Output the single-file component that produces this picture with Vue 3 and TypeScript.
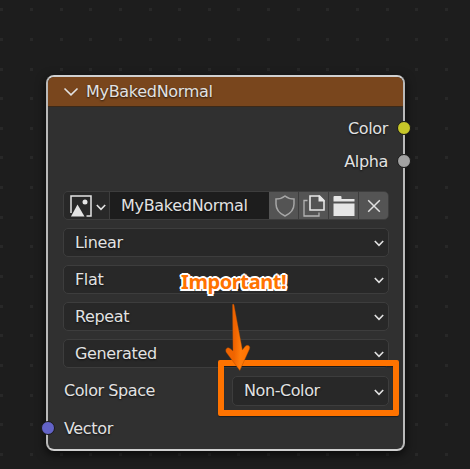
<script setup lang="ts">
interface Point {
  x: number
  y: number
}

const STEP = 29.64
const dots: Point[] = []
for (let row = 0; row < 16; row++) {
  for (let col = 0; col < 16; col++) {
    dots.push({
      x: Math.floor(0.8 + col * STEP),
      y: 8 + Math.floor(0.76 + row * STEP),
    })
  }
}

const options: string[] = ['Linear', 'Flat', 'Repeat', 'Generated']
</script>

<template>
  <main class="editor">
    <svg class="grid" width="470" height="469" shape-rendering="crispEdges">
      <rect v-for="(d, i) in dots" :key="i" :x="d.x" :y="d.y" width="3" height="3" fill="#282828" />
    </svg>

    <section class="node">
      <header class="head">
        <svg class="fold" width="16" height="10" viewBox="0 0 16 10">
          <path d="M1.5 1.5 8 7.8 14.500 1.500" />
        </svg>
        <span class="title">MyBakedNormal</span>
      </header>

      <div class="out"><span>Color</span><i class="socket yellow"></i></div>
      <div class="out"><span>Alpha</span><i class="socket grey"></i></div>

      <div class="body">
        <div class="picker">
          <button class="browse">
            <svg width="22" height="22" viewBox="0 0 22 22">
              <path d="M1 18V1H21V21H16.500" fill="none" stroke="#e4e4e4" stroke-width="1.500" />
              <path d="M1 21.500 7.500 9.500 14.500 21.500Z" fill="#e4e4e4" />
              <circle cx="15" cy="7" r="2.500" fill="#e4e4e4" />
            </svg>
            <svg class="caret" width="10" height="7" viewBox="0 0 10 7"><path d="M.8 1 5 5.300 9.200 1" /></svg>
          </button>
          <div class="name">MyBakedNormal</div>
          <button class="tool">
            <svg class="shield" width="20" height="22" viewBox="0 0 20 22">
              <path d="M10 1C7.500 3 4.300 4 1 4V9C1 14.500 4.500 18.500 10 21C15.500 18.500 19 14.500 19 9V4C15.700 4 12.500 3 10 1Z" fill="none" stroke="#a6a6a6" stroke-width="1.500" />
            </svg>
          </button>
          <button class="tool">
            <svg width="22" height="22" viewBox="0 0 22 22">
              <path d="M4.500 5.500H1V21H16V17.500" fill="none" stroke="#b4b4b4" stroke-width="1.300" />
              <path d="M7 1H16.500L21 5.500V15H7Z" fill="none" stroke="#e6e6e6" stroke-width="1.600" />
              <path d="M15.500 .5V6.500H21.500V5.500L16.500 .5Z" fill="#e6e6e6" />
            </svg>
          </button>
          <button class="tool">
            <svg width="22" height="22" viewBox="0 0 22 22">
              <path d="M.5 6.500V2Q.5 1 1.500 1H7.500Q8.500 1 8.500 2V4H21.500V6.500Z" fill="#e6e6e6" />
              <path d="M.5 8.500H21.500V21H.5Z" fill="#e6e6e6" />
            </svg>
          </button>
          <button class="tool">
            <svg width="14" height="14" viewBox="0 0 14 14">
              <path d="M1.200 1.200 12.800 12.800M12.800 1.200 1.200 12.800" fill="none" stroke="#e0e0e0" stroke-width="1.500" />
            </svg>
          </button>
        </div>

        <div v-for="o in options" :key="o" class="select">
          <span>{{ o }}</span>
          <svg class="caret" width="10" height="7" viewBox="0 0 10 7"><path d="M.8 1 5 5.300 9.200 1" /></svg>
        </div>

        <div class="space">
          <span class="label">Color Space</span>
          <div class="select">
            <span>Non-Color</span>
            <svg class="caret" width="10" height="7" viewBox="0 0 10 7"><path d="M.8 1 5 5.300 9.200 1" /></svg>
          </div>
        </div>

        <div class="vector">Vector</div>
      </div>
      <i class="socket blue"></i>
    </section>

    <div class="frame"></div>
    <svg class="arrow" width="30" height="70" viewBox="0 0 30 70">
      <defs>
        <linearGradient id="shaft" x1="0" x2="1" y1="0" y2="0.150">
          <stop offset="0" stop-color="#f06400" />
          <stop offset="0.450" stop-color="#f06400" />
          <stop offset="0.700" stop-color="#ff7b0a" />
          <stop offset="1" stop-color="#ff7300" />
        </linearGradient>
      </defs>
      <path d="M8.500 1.500Q9.500 .5 10 2L18.400 47 21 43.500Q23 41.500 25 42.700Q26.300 44 25.500 46L15.800 67.500 2 49Q1 46.500 3 45Q4.500 44.300 6 45.500L9 48Z" fill="url(#shaft)" stroke="#a84900" stroke-width=".4" />
    </svg>
    <div class="callout">Important!</div>
  </main>
</template>

<style>
body {
  margin: 0;
  background: #1d1d1d;
}
</style>

<style scoped>
.editor {
  position: relative;
  box-sizing: border-box;
  width: 470px;
  height: 469px;
  padding: 75px 0 0 46px;
  overflow: hidden;
  background: #1d1d1d;
  color: #e2e2e2;
  font: 16px/20px "DejaVu Sans", sans-serif;
  letter-spacing: -0.35px;
  text-shadow: 0 1px 2px rgba(0, 0, 0, 0.7);
}
.grid {
  position: absolute;
  left: 0;
  top: 0;
}
.node {
  position: relative;
  box-sizing: border-box;
  width: 359px;
  height: 376px;
  border: 2px solid #b9b9b9;
  border-top-color: #d0d0d0;
  border-bottom-color: #d0d0d0;
  border-radius: 8px;
  background: #303030;
  box-shadow: 0 3px 10px 1px rgba(0, 0, 0, 0.6);
}
.head {
  display: flex;
  align-items: center;
  box-sizing: border-box;
  height: 30px;
  padding-left: 15px;
  border-bottom: 1px solid #3c2918;
  border-radius: 6px 6px 0 0;
  background: #79461d;
}
.fold path,
.caret path {
  fill: none;
  stroke: #e2e2e2;
  stroke-width: 1.6;
}
.title {
  margin-left: 7px;
}
.title,
.name {
  letter-spacing: -0.3px;
}
.out {
  position: relative;
  height: 33px;
  padding-right: 15px;
  line-height: 33px;
  text-align: right;
}
.head + .out {
  margin-top: 5px;
}
.socket {
  position: absolute;
  box-sizing: border-box;
  width: 14px;
  height: 14px;
  border: 1px solid #191919;
  border-radius: 50%;
}
.out .socket {
  right: -7.5px;
  top: 9px;
}
.yellow {
  background: #c7c729;
}
.grey {
  background: #a1a1a1;
}
.blue {
  left: -7.3px;
  top: 344px;
  background: #6363c7;
}
.body {
  display: flex;
  flex-direction: column;
  gap: 8px;
  padding: 13px 14px 0 15px;
}
.picker {
  display: flex;
  box-sizing: border-box;
  height: 29px;
  overflow: hidden;
  border: 1px solid #3d3d3d;
  border-radius: 5px;
  background: #3d3d3d;
}
button {
  display: flex;
  align-items: center;
  justify-content: center;
  padding: 0;
  border: 0;
}
.browse {
  gap: 4px;
  width: 45px;
  margin-right: 1px;
  padding-left: 2px;
  background: #282828;
}
.browse .caret {
  margin-top: 3px;
}
.name {
  flex: 1;
  padding-left: 11px;
  background: #1d1d1d;
  line-height: 28px;
}
.tool {
  width: 29px;
  background: #545454;
}
.shield {
  margin-left: 2px;
}
.tool + .tool {
  margin-left: 1px;
}
.select {
  display: flex;
  align-items: center;
  justify-content: space-between;
  box-sizing: border-box;
  height: 29px;
  padding: 0 4px 0 11px;
  border: 1px solid #3d3d3d;
  border-radius: 5px;
  background: #282828;
}
.select .caret {
  margin-top: 2px;
}
.space {
  display: flex;
  align-items: center;
  justify-content: space-between;
  letter-spacing: -0.42px;
}
.space .select {
  width: 157px;
  height: 30px;
}
.label {
  padding-left: 1px;
}
.vector {
  height: 29px;
  padding-left: 1px;
  line-height: 29px;
}
.frame {
  position: absolute;
  box-sizing: border-box;
  left: 218px;
  top: 360px;
  width: 181px;
  height: 56px;
  border: 6px solid #ff7300;
  border-radius: 2px;
  box-shadow: 0 1px 1px rgba(0, 0, 0, 0.4), inset 0 1px 1px rgba(0, 0, 0, 0.4);
}
.arrow {
  position: absolute;
  left: 224px;
  top: 303px;
}
.callout {
  position: absolute;
  left: 181px;
  top: 270px;
  color: #ff7300;
  font: 700 20px/24px "Noto Sans", sans-serif;
  letter-spacing: -0.4px;
  text-shadow:
    2px 0 #fff,
    -2px 0 #fff,
    0 2px #fff,
    0 -2px #fff,
    1.5px 1.5px #fff,
    -1.5px 1.5px #fff,
    1.5px -1.5px #fff,
    -1.5px -1.5px #fff;
}
</style>
